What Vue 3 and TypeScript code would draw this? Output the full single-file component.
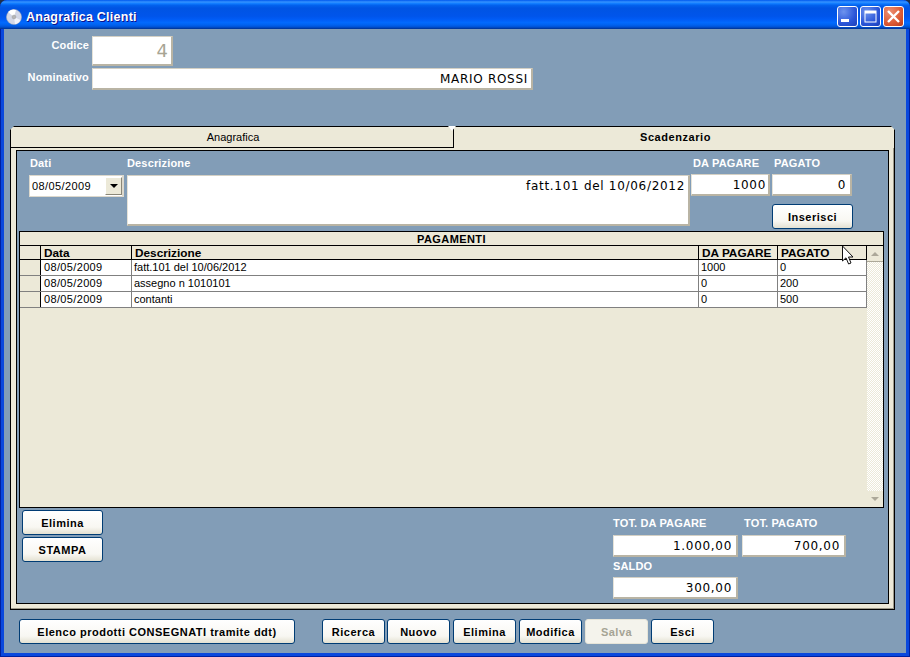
<script setup lang="ts">
interface Row { data: string; descrizione: string; daPagare: string; pagato: string }
const rows: Row[] = [
  { data: '08/05/2009', descrizione: 'fatt.101 del 10/06/2012', daPagare: '1000', pagato: '0' },
  { data: '08/05/2009', descrizione: 'assegno n 1010101', daPagare: '0', pagato: '200' },
  { data: '08/05/2009', descrizione: 'contanti', daPagare: '0', pagato: '500' },
]
const actions = ['Ricerca', 'Nuovo', 'Elimina', 'Modifica', 'Salva', 'Esci']
</script>

<template>
  <div class="window">
    <header class="titlebar">
      <svg class="disc" width="16" height="16" viewBox="0 0 16 16">
        <circle cx="8" cy="8" r="7.6" fill="#d3d7e6" stroke="#9aa3b5" stroke-width="0.5" />
        <path d="M8 8 L2 3 A7.4 7.4 0 0 1 10 0.9 Z" fill="#ffffff" />
        <path d="M8 8 L14.5 11 A7.4 7.4 0 0 1 9 15.2 Z" fill="#f0f2fa" />
        <circle cx="8" cy="8" r="1.8" fill="#fff" stroke="#777" stroke-width="0.6" />
        <circle cx="8" cy="8" r="0.7" fill="#333" />
      </svg>
      <span class="title">Anagrafica Clienti</span>
      <div class="controls">
        <span class="ctl">
          <svg width="21" height="21" viewBox="0 0 21 21"><rect x="4" y="13" width="8" height="3" fill="#fff" /></svg>
        </span>
        <span class="ctl">
          <svg width="21" height="21" viewBox="0 0 21 21"><rect x="5" y="5" width="11" height="11" fill="none" stroke="#fff" stroke-width="1" /><rect x="5" y="5" width="11" height="2.5" fill="#fff" /></svg>
        </span>
        <span class="ctl close">
          <svg width="21" height="21" viewBox="0 0 21 21"><path d="M5 5 L16 16 M16 5 L5 16" stroke="#fff" stroke-width="2.4" /></svg>
        </span>
      </div>
    </header>

    <main class="client">
      <section class="head">
        <label class="head-label">Codice</label>
        <div class="field codice">4</div>
        <label class="head-label">Nominativo</label>
        <div class="field nominativo">MARIO ROSSI</div>
      </section>

      <section class="tabs">
        <div class="tab-strip">
          <div class="tab tab-off">Anagrafica</div>
          <div class="tab tab-on">Scadenzario</div>
          <i class="notch"></i>
        </div>
        <div class="tab-body">
          <div class="inner">
            <div class="entry">
              <span class="lbl lbl-dati">Dati</span>
              <span class="lbl lbl-desc">Descrizione</span>
              <span class="lbl lbl-dp">DA PAGARE</span>
              <span class="lbl lbl-pg">PAGATO</span>

              <div class="date">
                <span>08/05/2009</span>
                <span class="drop"><i></i></span>
              </div>
              <div class="field desc">fatt.101 del 10/06/2012</div>
              <div class="field amount dp-box">1000</div>
              <div class="field amount pg-box">0</div>
              <button class="btn ins">Inserisci</button>
            </div>

            <div class="grid">
              <div class="caption">PAGAMENTI</div>
              <div class="grid-main">
                <div class="cols">
                  <div class="row hdr">
                    <span class="c0"></span>
                    <span class="c1">Data</span>
                    <span class="c2">Descrizione</span>
                    <span class="c3">DA PAGARE</span>
                    <span class="c4">PAGATO</span>
                  </div>
                  <div v-for="(r, i) in rows" :key="i" class="row">
                    <span class="c0"></span>
                    <span class="c1">{{ r.data }}</span>
                    <span class="c2">{{ r.descrizione }}</span>
                    <span class="c3">{{ r.daPagare }}</span>
                    <span class="c4">{{ r.pagato }}</span>
                  </div>
                </div>
                <div class="scroll">
                  <span class="arrow"><i class="up"></i></span>
                  <span class="track"></span>
                  <span class="arrow flat"><i class="down"></i></span>
                </div>
              </div>
            </div>

            <div class="lower">
              <div class="lower-btns">
                <button class="btn side">Elimina</button>
                <button class="btn side">STAMPA</button>
              </div>
              <div class="totals">
                <span class="lbl t1">TOT. DA PAGARE</span>
                <span class="lbl t2">TOT. PAGATO</span>
                <div class="field amount tbox">1.000,00</div>
                <div class="field amount tbox">700,00</div>
                <span class="lbl t3">SALDO</span>
                <div class="field amount tbox saldo">300,00</div>
              </div>
            </div>
          </div>
        </div>
      </section>

      <footer class="actions">
        <button class="btn wide">Elenco prodotti CONSEGNATI tramite ddt)</button>
        <div class="action-set">
          <button v-for="a in actions" :key="a" class="btn act" :class="{ off: a === 'Salva' }">{{ a }}</button>
        </div>
      </footer>
    </main>

    <svg class="cursor" width="14" height="21" viewBox="0 0 14 21">
      <path d="M1.5 1 V16 L5 12.8 L7.6 19 L10 18 L7.5 12 H12 Z" fill="#fff" stroke="#111" stroke-width="1" />
    </svg>
  </div>
</template>

<style>
html, body { margin: 0; background: #20304a; }
</style>

<style scoped>
.window {
  position: relative;
  width: 910px;
  height: 657px;
  display: flex;
  flex-direction: column;
  background: #0a48dd;
  box-shadow: inset 0 0 0 1px #00209f;
  border-radius: 7px 7px 0 0;
  overflow: hidden;
  font-family: "Liberation Sans", Arial, sans-serif;
  font-size: 11px;
  color: #000;
}
.titlebar {
  height: 29px;
  flex: none;
  display: flex;
  align-items: center;
  padding: 4px 6px 0 6px;
  box-sizing: border-box;
  background: linear-gradient(to bottom, #0058ee 0, #3593ff 7%, #127dff 12%, #0262ee 18%, #0054e3 28%, #0055eb 56%, #005bf5 66%, #026afe 78%, #0062ef 86%, #0052d6 93%, #0040ab 97%, #003092 100%);
}
.disc { flex: none; }
.title {
  margin-left: 4px;
  color: #fff;
  font-size: 12.5px;
  font-weight: 700;
  letter-spacing: 0.25px;
  text-shadow: 1px 1px 0 #0f1089;
}
.controls { margin-left: auto; display: flex; gap: 2px; }
.ctl {
  width: 21px;
  height: 21px;
  box-sizing: border-box;
  border: 1px solid #fff;
  border-radius: 3px;
  background: radial-gradient(circle at 30% 25%, #6d93ee, #2a55d8 60%, #1c3fb8);
  display: block;
  position: relative;
}
.ctl svg { position: absolute; left: -1px; top: -1px; }
.close { background: radial-gradient(circle at 30% 25%, #ec8f73, #dc5a34 60%, #b83a1c); }

.client {
  flex: 1;
  margin: 0 4px 4px;
  background: #829db7;
  display: flex;
  flex-direction: column;
  min-height: 0;
}
.head {
  padding-top: 7px;
  display: grid;
  grid-template-columns: 85px 441px;
  column-gap: 3px;
  row-gap: 2px;
}
.head-label {
  color: #fff;
  font-weight: 700;
  text-align: right;
  letter-spacing: 0.15px;
  line-height: 18px;
}
.field {
  background: #fff;
  box-sizing: border-box;
  border-style: solid;
  border-width: 1px 2px 2px 1px;
  border-color: #d4d0c4 #b9b4a4 #b9b4a4 #e6e3d8;
  font-family: "DejaVu Sans", Verdana, sans-serif;
  font-size: 12px;
  letter-spacing: 0.7px;
  text-align: right;
  padding-right: 3px;
  line-height: 19px;
}
.codice {
  width: 81px;
  height: 30px;
  font-size: 18px;
  letter-spacing: 0;
  line-height: 27px;
  color: #a8a594;
  padding-right: 3px;
}
.nominativo { height: 22px; padding-right: 3px; line-height: 21px; }

.tabs { margin: 36px 0 0 6px; width: 885px; }
.tab-strip { display: flex; height: 22px; position: relative; }
.tab {
  box-sizing: border-box;
  height: 22px;
  background: #ece9d8;
  border-top: 1px solid #000;
  text-align: center;
  line-height: 21px;
}
.tab-off {
  width: 444px;
  padding-left: 2px;
  border-left: 1px solid #000;
  border-right: 1px solid #000;
  border-bottom: 1px solid #000;
  clip-path: polygon(4px 0, 100% 0, 100% 100%, 0 100%, 0 4px);
}
.tab-on {
  flex: 1;
  padding-left: 3px;
  font-weight: 700;
  letter-spacing: 0.55px;
  border-right: 1px solid #000;
  clip-path: polygon(0 0, calc(100% - 4px) 0, 100% 4px, 100% 100%, 0 100%);
}
.notch {
  position: absolute;
  left: 438px;
  top: 0;
  width: 0;
  height: 0;
  border-left: 4px solid transparent;
  border-right: 4px solid transparent;
  border-top: 5px solid #fff;
}
.tab-body {
  height: 462px;
  box-sizing: border-box;
  background: #ece9d8;
  border-left: 1px solid #000;
  border-right: 1px solid #000;
  border-bottom: 1px solid #000;
  box-shadow: inset 0 -1px 0 #9d9a8a, inset -1px 0 0 #9d9a8a;
  padding: 2px 5px 5px 5px;
  position: relative;
}
.inner {
  height: 100%;
  box-sizing: border-box;
  border: 1px solid #000;
  background: #829db7;
  padding: 0 5px 0 2px;
  display: flex;
  flex-direction: column;
}
.entry {
  display: grid;
  grid-template-columns: 95px 563px 79px 81px;
  grid-template-rows: 24px 21px 33px;
  column-gap: 2px;
  padding-left: 10px;
  height: 80px;
  box-sizing: border-box;
}
.lbl {
  color: #fff;
  font-weight: 700;
  letter-spacing: 0.15px;
  line-height: 24px;
  white-space: nowrap;
}
.lbl-dati { padding-left: 1px; }
.lbl-desc { padding-left: 1px; }
.lbl-dp { padding-left: 2px; }
.lbl-pg { padding-left: 2px; }
.date {
  grid-column: 1;
  grid-row: 2;
  box-sizing: border-box;
  height: 22px;
  background: #fff;
  border: 1px solid #dcd8cc;
  border-right-width: 2px;
  display: flex;
  align-items: center;
  justify-content: space-between;
  padding-left: 2px;
  font-size: 11px;
  letter-spacing: 0.4px;
}
.drop {
  width: 17px;
  height: 18px;
  background: #ece9d8;
  border: 1px solid;
  border-color: #fff #8a8778 #8a8778 #fff;
  box-sizing: border-box;
  display: flex;
  align-items: center;
  justify-content: center;
}
.drop i {
  width: 0;
  height: 0;
  border-left: 4px solid transparent;
  border-right: 4px solid transparent;
  border-top: 4px solid #000;
}
.desc {
  grid-column: 2;
  grid-row: 2 / span 2;
  width: 563px;
  height: 51px;
  margin-left: 1px;
  padding-right: 3px;
  line-height: 20px;
}
.amount { height: 22px; padding-right: 4px; line-height: 20px; }
.dp-box { grid-column: 3; grid-row: 2; margin-top: -1px; padding-right: 2px; }
.pg-box { grid-column: 4; grid-row: 2; margin-top: -1px; width: 80px; }
.btn {
  font-family: "Liberation Sans", Arial, sans-serif;
  font-size: 11px;
  font-weight: 700;
  letter-spacing: 0.5px;
  color: #000;
  box-sizing: border-box;
  height: 25px;
  padding: 0;
  border: 1px solid #003c74;
  border-radius: 3px;
  background: linear-gradient(to bottom, #ffffff, #f8f7f2 70%, #e4e1d2);
}
.ins { grid-column: 4; grid-row: 3; width: 81px; margin-top: 8px; }
.grid {
  height: 277px;
  box-sizing: border-box;
  border: 1px solid #000;
  background: #ece9d8;
  display: flex;
  flex-direction: column;
  width: 865px;
  flex: none;
}
.caption {
  height: 13px;
  text-align: center;
  font-weight: 700;
  font-size: 11px;
  letter-spacing: 0.4px;
  line-height: 14px;
}
.grid-main { flex: 1; display: flex; min-height: 0; border-top: 1px solid #000; }
.cols { width: 847px; flex: none; }
.row {
  display: grid;
  grid-template-columns: 21px 91px 567px 79px 89px;
  height: 16px;
  box-sizing: border-box;
  border-bottom: 1px solid #808080;
  background: #fff;
  line-height: 14px;
  font-size: 11px;
  white-space: nowrap;
}
.row span {
  box-sizing: border-box;
  padding-left: 2px;
  border-right: 1px solid #808080;
  overflow: hidden;
}
.row .c0 { background: #ece9d8; border-right-color: #000; }
.row .c1 { letter-spacing: 0.35px; padding-left: 3px; }
.hdr {
  height: 14px;
  background: #ece9d8;
  border-bottom: 1px solid #000;
  font-weight: 700;
  line-height: 15px;
  font-size: 11.8px;
}
.row.hdr span { border-right-color: #000; padding-left: 3px; letter-spacing: 0; }
.scroll {
  flex: 1;
  display: flex;
  flex-direction: column;
  background: #ece9d8;
}
.arrow {
  height: 16px;
  flex: none;
  background: #ece9d8;
  border-bottom: 1px solid #aca899;
  box-sizing: border-box;
  display: flex;
  align-items: center;
  justify-content: center;
}
.arrow.flat { border-bottom: 0; }
.track {
  flex: 1;
  background-color: #ece9d8;
  background-image: conic-gradient(#fff 25%, transparent 0 50%, #fff 0 75%, transparent 0);
  background-size: 2px 2px;
}
.arrow i { width: 0; height: 0; border-left: 4px solid transparent; border-right: 4px solid transparent; }
.arrow .up { border-bottom: 4px solid #aca899; }
.arrow .down { border-top: 4px solid #aca899; }

.lower { display: flex; justify-content: space-between; flex: 1; }
.lower-btns {
  display: flex;
  flex-direction: column;
  gap: 2px;
  padding: 2px 0 0 3px;
}
.side { width: 81px; }
.totals {
  display: grid;
  grid-template-columns: 125px 104px;
  grid-template-rows: 27px 22px 20px 22px;
  column-gap: 4px;
  margin-right: 37px;
  width: 233px;
  align-content: start;
}
.t1, .t2 { line-height: 31px; height: 27px; }
.t2 { padding-left: 2px; }
.t3 { grid-column: 1; line-height: 18px; height: 20px; }
.tbox { height: 22px; line-height: 21px; }
.saldo { grid-column: 1; }

.actions {
  display: flex;
  align-items: flex-start;
  padding: 9px 0 0 15px;
}
.wide { width: 276px; flex: none; }
.action-set { display: flex; gap: 3px; margin-left: 27px; }
.act { width: 63px; }
.act:first-child { margin-right: -1px; }
.act.off {
  background: #f4f3ec;
  border-color: #e6e4d8;
  color: #a5a394;
}
.cursor { position: absolute; left: 841px; top: 245px; }
</style>
